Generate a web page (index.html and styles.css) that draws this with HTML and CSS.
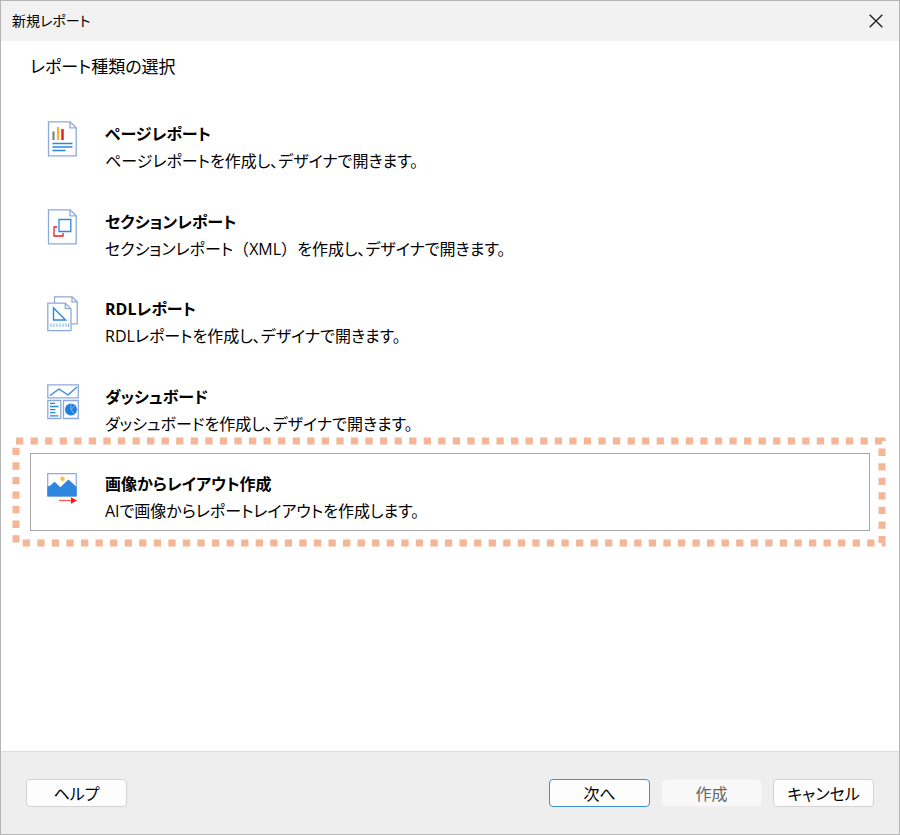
FILE: index.html
```html
<!DOCTYPE html>
<html lang="ja">
<head>
<meta charset="utf-8">
<meta name="viewport" content="width=device-width, initial-scale=1">
<title>新規レポート</title>
<link rel="stylesheet" href="styles.css">
</head>
<body>
<div class="dialog" role="dialog" aria-labelledby="dialog-title">
  <header class="titlebar">
    <h1 class="titlebar-text" id="dialog-title">新規レポート</h1>
    <button class="close" type="button" aria-label="閉じる">
      <svg width="14" height="14" viewBox="0 0 14 14"><path d="M.7.7 13.3 13.3M13.3.7.7 13.3" fill="none" stroke="#222" stroke-width="1.4"/></svg>
    </button>
  </header>

  <main class="content">
    <h2 class="heading">レポート種類の選択</h2>
    <ul class="types">
      <li class="type">
        <button class="option" type="button">
          <svg class="icon" viewBox="0 0 32 36">
            <path d="M1.500.8h21.500l6.200 6v28H1.500z" fill="#fff" stroke="#8ea9db" stroke-width="1.300"/>
            <path d="M23 .8v6h6.200" fill="none" stroke="#8ea9db" stroke-width="1.300"/>
            <path d="M6.500 10.500v8.500" stroke="#777" stroke-width="2"/>
            <path d="M11 6v13" stroke="#f7b52c" stroke-width="2.200"/>
            <path d="M15.500 8v11" stroke="#e8171f" stroke-width="2.400"/>
            <path d="M5.500 22.500h20M5.500 26h20M5.500 29.500h13" stroke="#2b88e0" stroke-width="1.300"/>
          </svg>
          <span class="label"><span class="name">ページレポート</span><span class="desc">ページレポートを作成し、デザイナで開きます。</span></span>
        </button>
      </li>
      <li class="type">
        <button class="option" type="button">
          <svg class="icon" viewBox="0 0 32 36">
            <path d="M1.500.8h21.500l6.200 6v28H1.500z" fill="#fff" stroke="#8ea9db" stroke-width="1.300"/>
            <path d="M23 .8v6h6.200" fill="none" stroke="#8ea9db" stroke-width="1.300"/>
            <path d="M10 18H7v9h9v-3" fill="none" stroke="#ee1c25" stroke-width="1.300"/>
            <path d="M12 10.500h11.800v12H12z" fill="none" stroke="#2b88e0" stroke-width="1.300"/>
          </svg>
          <span class="label"><span class="name">セクションレポート</span><span class="desc">セクションレポート<span class="wide">（</span>XML<span class="wide">）</span>を作成し、デザイナで開きます。</span></span>
        </button>
      </li>
      <li class="type">
        <button class="option" type="button">
          <svg class="icon" viewBox="0 0 32 36">
            <path d="M7.500 7V.8h17.500l5.200 5v22h-6" fill="none" stroke="#8ea9db" stroke-width="1.300"/>
            <path d="M25 .8v5h5.200" fill="none" stroke="#8ea9db" stroke-width="1.300"/>
            <path d="M.8 7.200h17.500l5.700 5.500v22H.8z" fill="#fff" stroke="#8ea9db" stroke-width="1.300"/>
            <path d="M18.300 7.200v5.500h5.700" fill="none" stroke="#8ea9db" stroke-width="1.300"/>
            <path d="M6.500 12v12h12z" fill="none" stroke="#2b88e0" stroke-width="1.400"/>
            <path d="M4 27.500v3.500M7 27.500v3.500M10 27.500v3.500M13 27.500v3.500M16 27.500v3.500M19 27.500v3.500M21.500 27.500v3.500" stroke="#7ab3ec" stroke-width="1"/>
          </svg>
          <span class="label"><span class="name">RDLレポート</span><span class="desc">RDLレポートを作成し、デザイナで開きます。</span></span>
        </button>
      </li>
      <li class="type">
        <button class="option" type="button">
          <svg class="icon" viewBox="0 0 32 36">
            <path d="M.8.8h30.500v13H.8zM.8 16.500h13v18H.8zM16.500 16.500h14.800v18H16.500z" fill="#fff" stroke="#8ea9db" stroke-width="1.300"/>
            <path d="M3 11.500 12 5l9 6 9-8" fill="none" stroke="#2b88e0" stroke-width="1.300"/>
            <path d="M3 19.300h5M3 22.500h8.500M3 25.600h5.500M3 28.700h5.500M3 31.800h8.500" stroke="#2b88e0" stroke-width="1.300"/>
            <circle cx="24" cy="25.500" r="6" fill="#1f7fdc"/>
            <path d="M24 25.500v-6M24 25.500l4-4M24 25.500l3.500 5" stroke="#9dc6f1" stroke-width=".8"/>
          </svg>
          <span class="label"><span class="name">ダッシュボード</span><span class="desc">ダッシュボードを作成し、デザイナで開きます。</span></span>
        </button>
      </li>
      <li class="type">
        <button class="option selected" type="button" aria-pressed="true">
          <svg class="icon" viewBox="0 0 32 36">
            <path d="M.7 2.700h28.600v22.300H.7z" fill="#fff" stroke="#8ea9db" stroke-width="1.200"/>
            <path d="M.4 15.500l3-1 4.200-3.800 5.800 5.600 8-7.800 5 4.500 3.200 3v9.500H.4z" fill="#2f86de"/>
            <circle cx="15.500" cy="7.700" r="2.300" fill="#f6c343"/>
            <path d="M12 29.500h13" stroke="#ff5a5a" stroke-width="1.300"/>
            <path d="M24 26.300l6 3.200-6 3.200z" fill="#ff1515"/>
          </svg>
          <span class="label"><span class="name">画像からレイアウト作成</span><span class="desc">AIで画像からレポートレイアウトを作成します。</span></span>
        </button>
        <svg class="callout" aria-hidden="true"><rect width="100%" height="100%" fill="none" stroke="#f4b696" stroke-width="7" stroke-dasharray="7.280"/></svg>
      </li>
    </ul>
  </main>

  <footer class="footer">
    <button class="btn" type="button">ヘルプ</button>
    <div class="actions">
      <button class="btn primary" type="button">次へ</button>
      <button class="btn" type="button" disabled>作成</button>
      <button class="btn" type="button">キャンセル</button>
    </div>
  </footer>
</div>
</body>
</html>
```
FILE: styles.css
```css
* {
  box-sizing: border-box;
}

body {
  margin: 0;
  color: #000;
  font-family: "Open Sans", "Noto Sans CJK JP", sans-serif;
  font-size: 16px;
  font-feature-settings: "palt";
}

button {
  margin: 0;
  padding: 0;
  color: inherit;
  font: inherit;
  font-feature-settings: inherit;
}

.dialog {
  display: flex;
  flex-direction: column;
  min-height: 100vh;
  border: 1px solid #b4b4b4;
  background: #fff;
}

.titlebar {
  display: flex;
  align-items: center;
  justify-content: space-between;
  height: 40px;
  padding: 0 16px 0 11px;
  background: #f2f2f2;
}

.titlebar-text {
  margin: 0;
  font-size: 14px;
  font-weight: 400;
  line-height: 18px;
}

.close {
  display: flex;
  border: 0;
  background: none;
}

.content {
  flex: 1;
  padding: 12px 29px 24px;
}

.heading {
  margin: 0 0 22px;
  font-size: 17px;
  font-weight: 400;
  line-height: 28px;
}

.types {
  display: flex;
  flex-direction: column;
  justify-content: space-between;
  min-height: 428px;
  margin: 0;
  padding: 0;
  list-style: none;
}

.type {
  position: relative;
}

.option {
  display: flex;
  gap: 26px;
  width: 100%;
  padding: 17px 16px 5px;
  border: 1px solid transparent;
  background: none;
  text-align: left;
}

.option.selected {
  border-color: #a6a6a6;
}

.icon {
  flex: none;
  width: 32px;
  height: 36px;
}

.label {
  display: flex;
  flex-direction: column;
  line-height: 27px;
}

.name {
  font-weight: 700;
}

.wide {
  font-feature-settings: normal;
}

.callout {
  position: absolute;
  top: -12px;
  left: -14px;
  width: calc(100% + 26px);
  height: calc(100% + 24px);
  overflow: visible;
  pointer-events: none;
}

.footer {
  display: flex;
  align-items: center;
  justify-content: space-between;
  height: 83px;
  padding: 0 25px;
  border-top: 1px solid #dcdcdc;
  background: #eee;
}

.actions {
  display: flex;
  gap: 11px;
}

.btn {
  width: 101px;
  height: 28px;
  padding-top: 2px;
  border: 1px solid #d2d2d2;
  border-radius: 4px;
  background: #fdfdfd;
  line-height: 24px;
}

.btn.primary {
  border-color: #3a8fd6;
}

.btn:disabled {
  border-color: #f0f0f0;
  background: #f8f8f8;
  color: #666;
}
```
